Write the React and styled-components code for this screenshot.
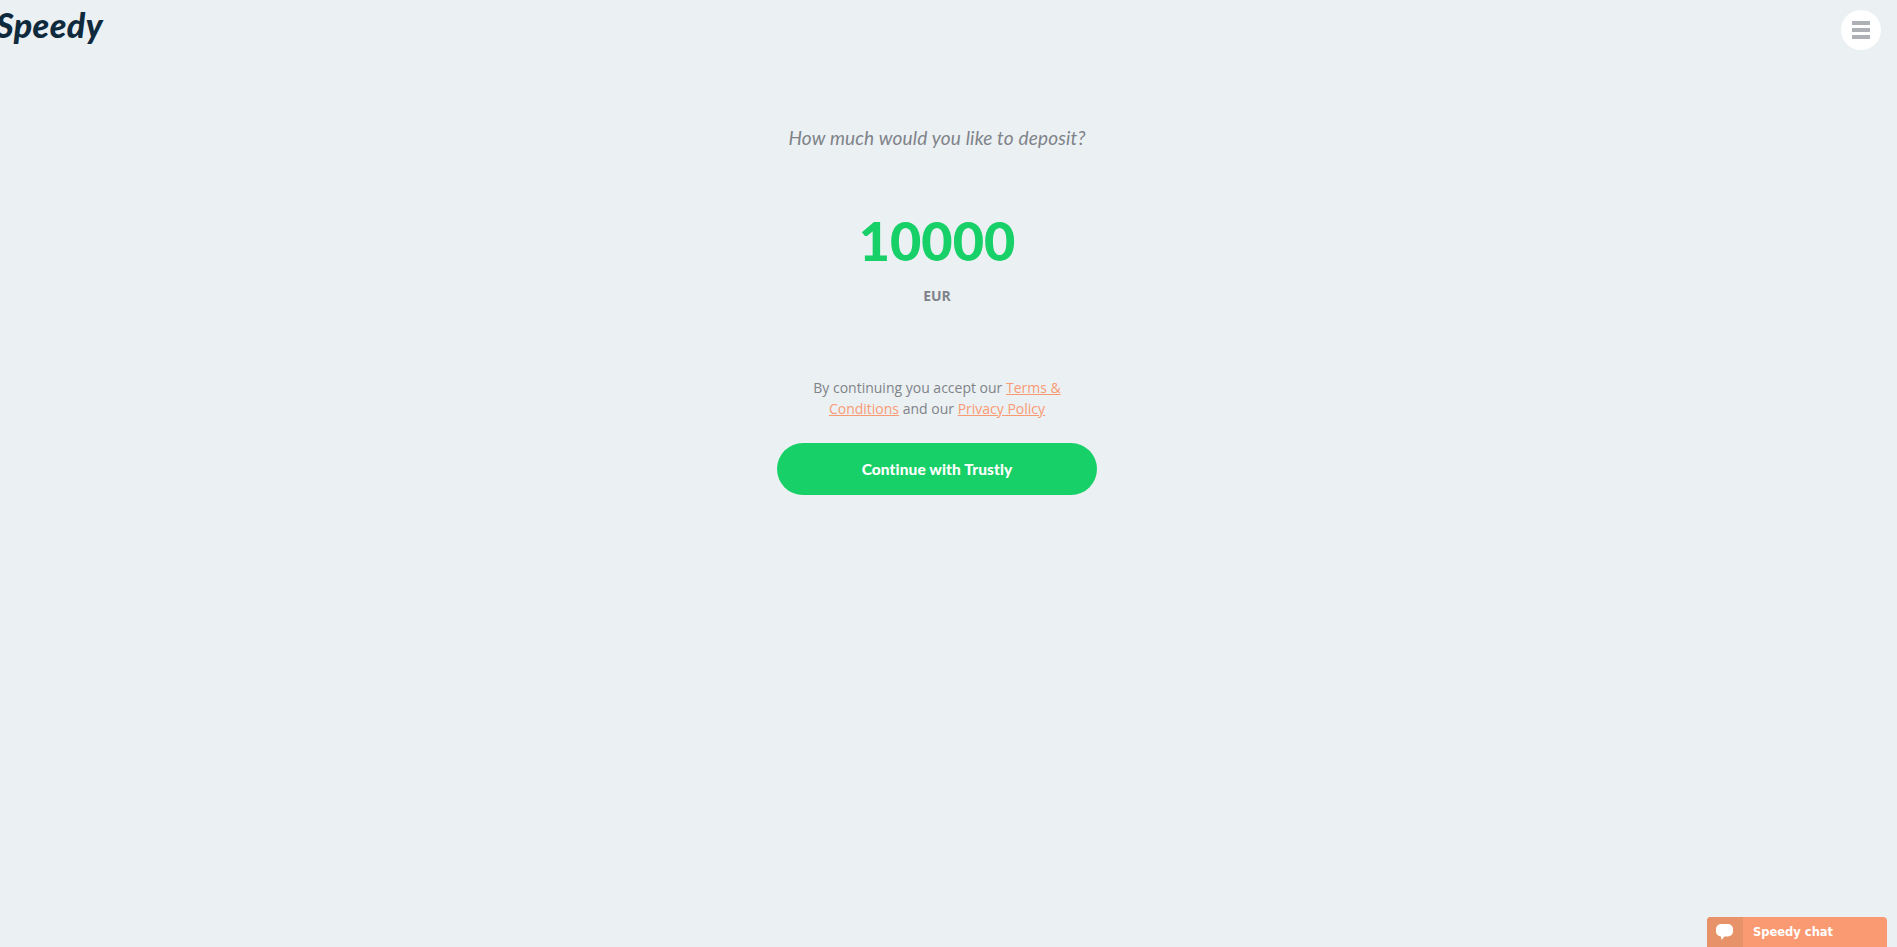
import React from "react";
import styled, { createGlobalStyle } from "styled-components";

const GlobalStyle = createGlobalStyle`
  html, body {
    margin: 0;
    height: 100%;
    overflow: hidden;
    background: #ebf0f3;
  }
  #root {
    height: 100%;
  }
`;

const Page = styled.div`
  position: relative;
  height: 947px;
  display: flex;
  flex-direction: column;
  overflow: hidden;
`;

const Header = styled.header`
  height: 50px;
  display: flex;
  justify-content: space-between;
  align-items: flex-start;
  padding: 10px 16px 0 0;
`;

const Logo = styled.div`
  margin: -7px 0 0 -4px;
  font-family: Lato, sans-serif;
  font-weight: 900;
  font-style: italic;
  font-size: 34px;
  line-height: 44px;
  letter-spacing: 0.4px;
  color: #0f2a3d;
`;

const MenuButton = styled.button`
  width: 40px;
  height: 40px;
  padding: 0;
  border: 0;
  border-radius: 50%;
  background: #ffffff;
  display: flex;
  align-items: center;
  justify-content: center;
`;

const Main = styled.main`
  width: 320px;
  margin-right: 23px;
  align-self: center;
  display: flex;
  flex-direction: column;
  align-items: center;
`;

const Question = styled.h2`
  margin: 66px 0 0;
  font-family: Lato, sans-serif;
  font-weight: 400;
  font-style: italic;
  font-size: 19px;
  line-height: 24px;
  letter-spacing: 0.18px;
  color: #7f8389;
`;

const Amount = styled.div`
  margin-top: 60px;
  font-family: Lato, sans-serif;
  font-weight: 900;
  font-size: 54px;
  line-height: 62px;
  color: #17d068;
`;

const Currency = styled.div`
  margin-top: 14px;
  font-family: "Open Sans", sans-serif;
  font-weight: 700;
  font-size: 14px;
  line-height: 20px;
  color: #7f8389;
`;

const Terms = styled.p`
  width: 260px;
  margin: 71px 0 0;
  text-align: center;
  font-family: "Open Sans", sans-serif;
  font-size: 14px;
  line-height: 21px;
  color: #7f8389;
`;

const TermsLink = styled.a`
  color: #fa9a73;
  text-decoration: underline;
`;

const ContinueButton = styled.button`
  width: 320px;
  height: 52px;
  margin-top: 24px;
  border: 0;
  border-radius: 26px;
  background: #17d068;
  color: #ffffff;
  font-family: Lato, sans-serif;
  font-weight: 900;
  font-size: 15.5px;
  letter-spacing: 0.1px;
`;

const Chat = styled.div`
  position: absolute;
  right: 10px;
  bottom: 0;
  width: 180px;
  height: 30px;
  display: flex;
  border-radius: 4px 4px 0 0;
  overflow: hidden;
  background: #fa9a73;
`;

const ChatIcon = styled.div`
  width: 36px;
  padding-right: 2px;
  box-sizing: border-box;
  display: flex;
  align-items: center;
  justify-content: center;
  background: #e89269;
`;

const ChatLabel = styled.div`
  padding-left: 10px;
  font-family: "DejaVu Sans", sans-serif;
  font-weight: 700;
  font-size: 11.5px;
  line-height: 30px;
  color: #ffffff;
`;

export default function App() {
  return (
    <Page>
      <GlobalStyle />
      <Header>
        <Logo>Speedy</Logo>
        <MenuButton aria-label="Menu">
          <svg width="18" height="18" viewBox="0 0 18 18" fill="#adb1b6">
            <rect y="0" width="18" height="4" />
            <rect y="7" width="18" height="4" />
            <rect y="14" width="18" height="4" />
          </svg>
        </MenuButton>
      </Header>
      <Main>
        <Question>How much would you like to deposit?</Question>
        <Amount>10000</Amount>
        <Currency>EUR</Currency>
        <Terms>
          By continuing you accept our <TermsLink href="#">Terms &amp; Conditions</TermsLink> and
          our <TermsLink href="#">Privacy Policy</TermsLink>
        </Terms>
        <ContinueButton>Continue with Trustly</ContinueButton>
      </Main>
      <Chat>
        <ChatIcon>
          <svg width="17" height="16" viewBox="0 0 17 16" fill="#ffffff">
            <path d="M5 0h7a5 5 0 0 1 5 5v2.5a5 5 0 0 1-5 5H8.5L5.5 16l-.5-3.5a5 5 0 0 1-5-5V5a5 5 0 0 1 5-5z" />
          </svg>
        </ChatIcon>
        <ChatLabel>Speedy chat</ChatLabel>
      </Chat>
    </Page>
  );
}
